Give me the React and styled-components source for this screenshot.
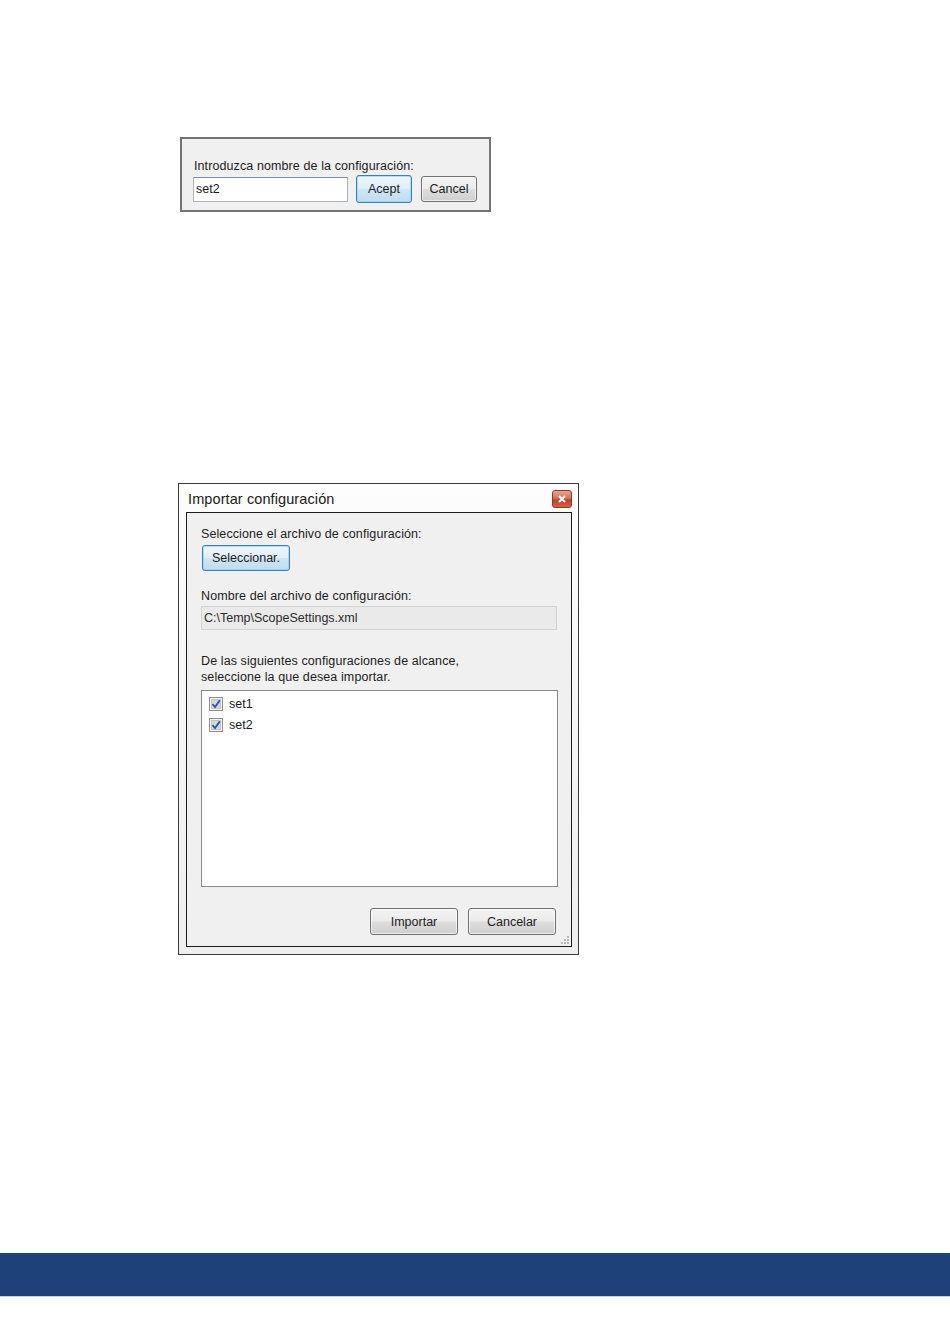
import React from 'react';
import styled, { createGlobalStyle } from 'styled-components';

const GlobalStyle = createGlobalStyle`
  html, body {
    margin: 0;
    padding: 0;
    background: #ffffff;
  }
  body {
    font-family: "Liberation Sans", Arial, sans-serif;
    color: #1a1a1a;
  }
`;

const Page = styled.div`
  width: 950px;
  height: 1344px;
  display: flex;
  flex-direction: column;
  padding-top: 137px;
  box-sizing: border-box;
`;

const PromptBox = styled.div`
  margin-left: 180px;
  width: 311px;
  height: 75px;
  box-sizing: border-box;
  border: 2px solid #747474;
  background: #f0f0f0;
  padding: 20px 0 0 12px;
`;

const Label = styled.div`
  font-size: 12.5px;
  letter-spacing: 0.1px;
  line-height: ${(p) => p.lh || 14}px;
  color: #1c1c1c;
  white-space: nowrap;
`;

const PromptRow = styled.div`
  display: flex;
  align-items: center;
  margin-top: 2px;
  margin-left: -1px;
`;

const TextInput = styled.div`
  width: 155px;
  height: 25px;
  box-sizing: border-box;
  border: 1px solid #a9b3c2;
  border-top-color: #7f8ea4;
  background: #ffffff;
  font-size: 12.5px;
  line-height: 23px;
  padding-left: 2px;
  margin-right: ${(p) => p.gap || 0}px;
`;

const WinButton = styled.div`
  width: ${(p) => p.w}px;
  height: ${(p) => p.h}px;
  margin-right: ${(p) => p.mr || 0}px;
  box-sizing: border-box;
  border: 1px solid ${(p) => (p.focused ? '#3c7fb1' : '#707070')};
  border-radius: 3px;
  background: ${(p) =>
    p.focused
      ? 'linear-gradient(#eef6fc 0%, #e0eef8 48%, #cfe5f4 52%, #c0dcef 100%)'
      : 'linear-gradient(#f3f3f3 0%, #ebebeb 48%, #dddddd 52%, #cfcfcf 100%)'};
  box-shadow: inset 0 0 0 1px ${(p) => (p.focused ? '#8fd2f3aa' : '#ffffffaa')};
  display: flex;
  align-items: center;
  justify-content: center;
  font-size: 12.5px;
  color: #1c1c1c;
`;

const Spacer = styled.div`
  height: ${(p) => p.h}px;
  flex-shrink: 0;
`;

const Window = styled.div`
  margin-left: 178px;
  width: 401px;
  height: 472px;
  box-sizing: border-box;
  border: 1px solid #3a3a3a;
  background: linear-gradient(#fdfdfd, #f4f4f4 60%, #eeeeee);
  display: flex;
  flex-direction: column;
`;

const TitleBar = styled.div`
  height: 28px;
  display: flex;
  align-items: center;
  justify-content: space-between;
  padding: 0 6px 0 9px;
  flex-shrink: 0;
`;

const Title = styled.div`
  font-size: 14.5px;
  color: #202020;
  letter-spacing: 0.1px;
  margin-top: 2px;
`;

const CloseButton = styled.div`
  width: 20px;
  height: 18px;
  box-sizing: border-box;
  border: 1px solid #8c3a2e;
  border-radius: 3px;
  background: linear-gradient(#e8a593 0%, #d8705a 45%, #c2412a 55%, #d7603f 100%);
  display: flex;
  align-items: center;
  justify-content: center;
  margin-top: 2px;
`;

const Client = styled.div`
  flex: 1;
  margin: 0 6px 7px 7px;
  border: 1px solid #1c1c1c;
  background: #f0f0f0;
  padding: 14px 14px 0 14px;
  display: flex;
  flex-direction: column;
  position: relative;
`;

const ReadOnlyField = styled.div`
  width: 356px;
  height: 24px;
  box-sizing: border-box;
  border: 1px solid #d2d2d2;
  background: #eaeaea;
  font-size: 12.5px;
  line-height: 22px;
  padding-left: 2px;
  color: #2a2a2a;
`;

const ListBox = styled.div`
  width: 357px;
  height: 197px;
  box-sizing: border-box;
  border: 1px solid #8a8a8a;
  background: #ffffff;
  padding: 2px 0 0 7px;
  display: flex;
  flex-direction: column;
`;

const ListItem = styled.div`
  height: 21px;
  display: flex;
  align-items: center;
  gap: 6px;
  font-size: 12.5px;
`;

const Footer = styled.div`
  display: flex;
  justify-content: flex-end;
  gap: 10px;
  padding-right: 1px;
`;

const Grip = styled.div`
  position: absolute;
  right: 2px;
  bottom: 2px;
  width: 10px;
  height: 10px;
  display: grid;
  grid-template-columns: repeat(3, 2px);
  grid-template-rows: repeat(3, 2px);
  gap: 1px;
  justify-content: end;
  align-content: end;
`;

const GripDot = styled.span`
  width: 2px;
  height: 2px;
  background: ${(p) => (p.on ? '#b8b8b8' : 'transparent')};
`;

const BottomBand = styled.div`
  width: 950px;
  height: 43px;
  background: #1f417a;
  border-bottom: 1px solid #c6d1e2;
  flex-shrink: 0;
`;

function CheckBox() {
  return (
    <svg width="14" height="14" viewBox="0 0 14 14">
      <rect x="0.5" y="0.5" width="13" height="13" fill="#f4f4f4" stroke="#8e8f8f" />
      <rect x="2.5" y="2.5" width="9" height="9" fill="#d8d8d8" stroke="#c4c4c4" />
      <path d="M3.5 7.2 L6 10 L10.8 3.4" fill="none" stroke="#2a57a8" strokeWidth="1.8" />
    </svg>
  );
}

export default function App() {
  const gripDots = [false, false, true, false, true, true, true, true, true];
  return (
    <Page>
      <GlobalStyle />
      <PromptBox>
        <Label>Introduzca nombre de la configuración:</Label>
        <PromptRow>
          <TextInput gap={8}>set2</TextInput>
          <WinButton w={56} h={28} mr={9} focused>Acept</WinButton>
          <WinButton w={56} h={26}>Cancel</WinButton>
        </PromptRow>
      </PromptBox>

      <Spacer h={271} />

      <Window>
        <TitleBar>
          <Title>Importar configuración</Title>
          <CloseButton>
            <svg width="8" height="8" viewBox="0 0 8 8">
              <path d="M1 1 L7 7 M7 1 L1 7" stroke="#ffffff" strokeWidth="2" />
            </svg>
          </CloseButton>
        </TitleBar>
        <Client>
          <Label>Seleccione el archivo de configuración:</Label>
          <Spacer h={4} />
          <WinButton w={88} h={26} focused style={{ marginLeft: 1 }}>Seleccionar.</WinButton>
          <Spacer h={18} />
          <Label>Nombre del archivo de configuración:</Label>
          <Spacer h={3} />
          <ReadOnlyField>C:\Temp\ScopeSettings.xml</ReadOnlyField>
          <Spacer h={23} />
          <Label lh={16}>De las siguientes configuraciones de alcance,</Label>
          <Label lh={16}>seleccione la que desea importar.</Label>
          <Spacer h={5} />
          <ListBox>
            <ListItem>
              <CheckBox />
              set1
            </ListItem>
            <ListItem>
              <CheckBox />
              set2
            </ListItem>
          </ListBox>
          <Spacer h={21} />
          <Footer>
            <WinButton w={88} h={27}>Importar</WinButton>
            <WinButton w={88} h={27}>Cancelar</WinButton>
          </Footer>
          <Grip>
            {gripDots.map((on, i) => (
              <GripDot key={i} on={on} />
            ))}
          </Grip>
        </Client>
      </Window>

      <Spacer h={298} />
      <BottomBand />
    </Page>
  );
}
